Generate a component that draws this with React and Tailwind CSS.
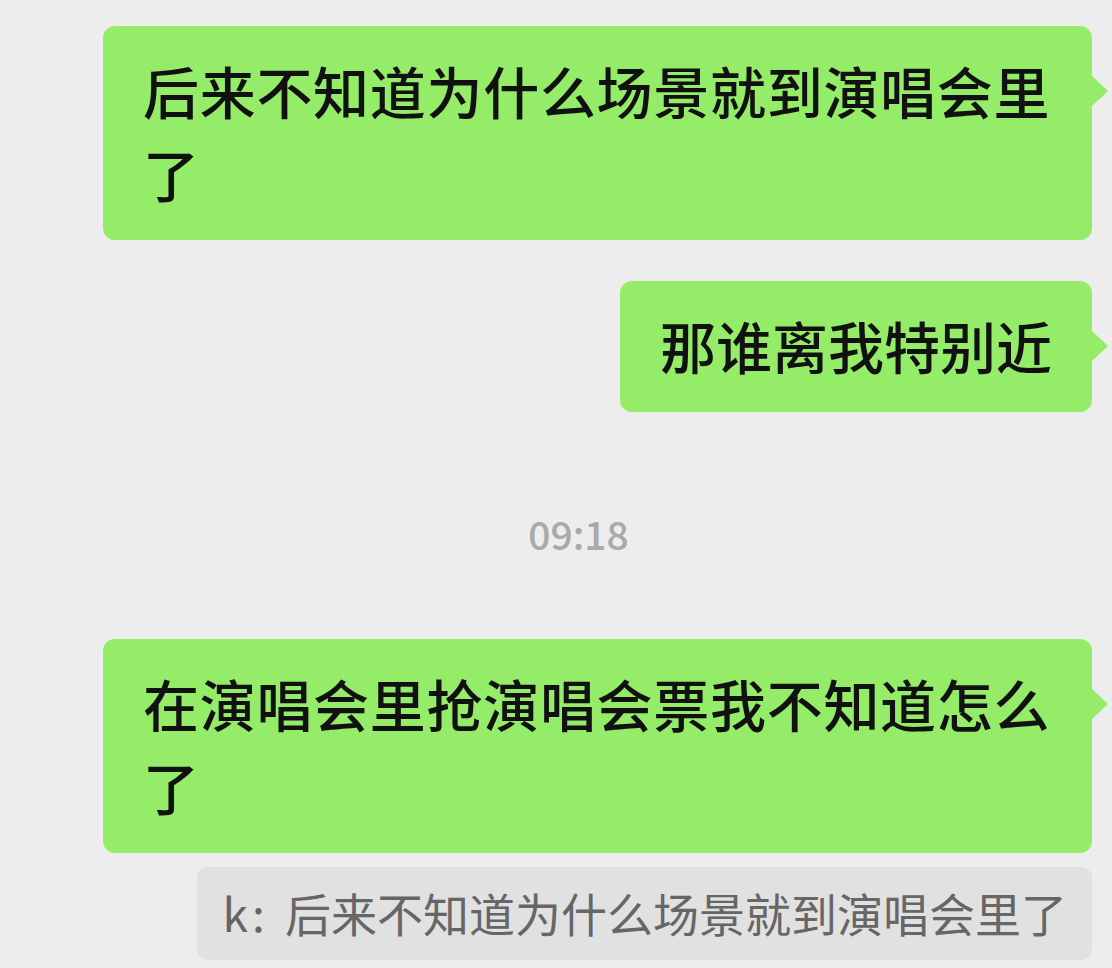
import React from "react";

const font = { fontFamily: '"Noto Sans CJK SC", "Noto Sans", sans-serif' };

// green outgoing bubble with the little arrow on its right edge
const Bubble = ({ text, wide }) => (
  <div className={`relative ${wide ? "w-full" : ""} max-w-[989px]`}>
    <div
      className={`rounded-[12px] bg-[#95ec69] px-[40px] pt-[22px] pb-[26px] text-[56px] leading-[83px] font-medium text-[#111111] ${
        wide ? "tracking-[0.7px]" : ""
      }`}
    >
      {text}
    </div>
    <div className="absolute right-[-16px] top-[50px] h-0 w-0 border-y-[15px] border-l-[16px] border-y-transparent border-l-[#95ec69]" />
  </div>
);

export default function App() {
  return (
    <div className="min-h-screen w-full bg-[#ededed] pt-[26px] pr-[20px]" style={font}>
      <div className="flex flex-col items-end">
        <Bubble text="后来不知道为什么场景就到演唱会里了" wide />
        <div className="mt-[41px]">
          <Bubble text="那谁离我特别近" />
        </div>

        {/* time divider */}
        <div className="mt-[96px] mb-[81px] w-full pl-[65px] text-center text-[39px] leading-[50px] font-medium text-[#a9a9a9]">
          09:18
        </div>

        <Bubble text="在演唱会里抢演唱会票我不知道怎么了" wide />

        {/* quoted reply */}
        <div className="mt-[14px] rounded-[10px] bg-[#e1e1e1] px-[25px] pt-[15px] pb-[17px] text-[46px] leading-[61px] text-[#666666]">
          k<span className="ml-[4px] mr-[10px]">:</span> 后来不知道为什么场景就到演唱会里了
        </div>
      </div>
    </div>
  );
}
